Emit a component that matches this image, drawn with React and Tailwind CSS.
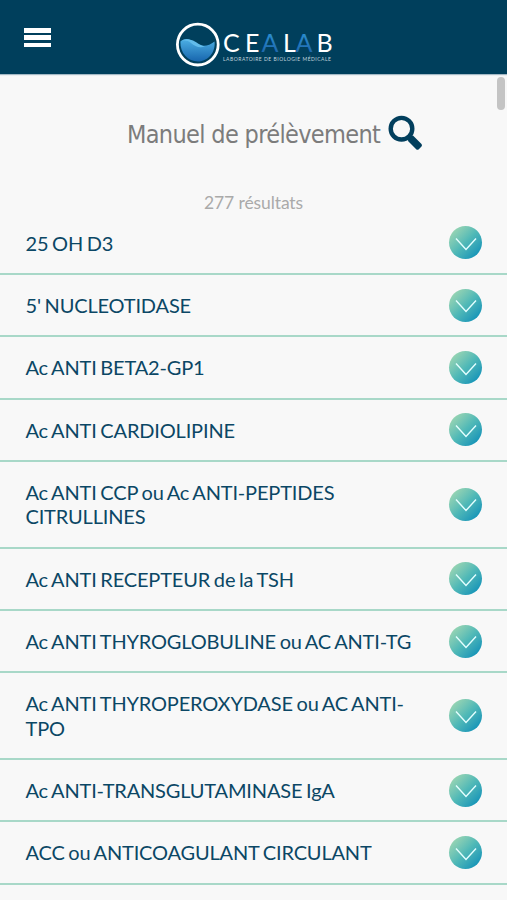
import React, { useState } from "react";

const analyses = [
    "25 OH D3",
    "5' NUCLEOTIDASE",
    "Ac ANTI BETA2-GP1",
    "Ac ANTI CARDIOLIPINE",
    "Ac ANTI CCP ou Ac ANTI-PEPTIDES CITRULLINES",
    "Ac ANTI RECEPTEUR de la TSH",
    "Ac ANTI THYROGLOBULINE ou AC ANTI-TG",
    "Ac ANTI THYROPEROXYDASE ou AC ANTI-TPO",
    "Ac ANTI-TRANSGLUTAMINASE IgA",
    "ACC ou ANTICOAGULANT CIRCULANT",
];

function Logo() {
    return (
        <svg width="160" height="48" viewBox="0 0 160 48" className="block">
            <defs>
                <linearGradient id="water" x1="0" y1="0" x2="0" y2="1">
                    <stop offset="0" stopColor="#4db0e4" />
                    <stop offset="1" stopColor="#1765ad" />
                </linearGradient>
                <linearGradient id="letter" x1="0" y1="0" x2="0" y2="1">
                    <stop offset="0" stopColor="#2f9bdb" />
                    <stop offset="1" stopColor="#1c5fa5" />
                </linearGradient>
            </defs>
            {/* drop of water in the ring */}
            <path d="M5.4 21.5C9 18 14 18 19 22C25 27 33 27 39.5 21.5C41 32 33 41.5 23 41.5C13 41.5 5 33 5.4 21.5Z" fill="url(#water)" />
            <path d="M14 19.5C20 20 23 25 30 26.3C25 28.5 20 26.5 16 23C12 20 8 20 5.5 22C8 19.5 11 19 14 19.5Z" fill="#62bceb" />
            <circle cx="22.8" cy="24.6" r="20.4" fill="none" stroke="#fff" strokeWidth="2.8" />
            <g fontFamily="Lato, sans-serif" fontSize="25" fill="#fff">
                <text x="48" y="31.7">C</text>
                <text x="70" y="31.7">E</text>
                <text x="86.5" y="31.7" fill="url(#letter)">A</text>
                <text x="108" y="31.7">L</text>
                <text x="120.5" y="31.7" fill="url(#letter)">A</text>
                <text x="141.5" y="31.7">B</text>
            </g>
            <text x="48" y="40.7" fontFamily="Lato, sans-serif" fontSize="5" fill="#c3d4df" textLength="108">
                LABORATOIRE DE BIOLOGIE MÉDICALE
            </text>
        </svg>
    );
}

function SearchIcon() {
    return (
        <svg width="38" height="38" viewBox="0 0 38 38" className="block shrink-0">
            <path d="M19 22.5L22.5 19L24.5 21L26 20.6L34.5 29Q35.5 30.2 34.5 31.4L31.8 34.2Q30.4 35.3 29.2 34.2L21 26L21.2 24.6Z" fill="#023f5d" />
            <circle cx="14.5" cy="13.7" r="10.8" fill="none" stroke="#023f5d" strokeWidth="4.4" />
        </svg>
    );
}

function Chevron() {
    return (
        <span className="flex h-[33px] w-[33px] shrink-0 items-center justify-center rounded-full bg-linear-to-br from-[#9bd6b2] from-10% via-[#50b9b7] via-50% to-[#0792b8] to-90%">
            <svg width="22" height="14" viewBox="0 0 22 14" fill="none" stroke="#e4ffff" strokeWidth="1.4" className="mt-[2px]">
                <path d="M1 1.5L11 12.5L21 1.5" />
            </svg>
        </span>
    );
}

export default function App() {
    const [opened, setOpened] = useState(null);

    return (
        <div className="flex h-[900px] w-full flex-col overflow-hidden bg-[#f8f8f8] font-[Lato,sans-serif]">
            {/* Header */}
            <header className="flex h-[74px] shrink-0 bg-[#003f5c] pl-6 shadow-[0_1px_1px_#a4b9c5]">
                <button type="button" aria-label="Menu" className="mt-[28px] flex h-[19px] w-[27px] flex-col justify-between">
                    <span className="h-[4.5px] w-full bg-white"></span>
                    <span className="h-[4.5px] w-full bg-white"></span>
                    <span className="h-[4.5px] w-full bg-white"></span>
                </button>
                <div className="ml-[124px] mt-5">
                    <Logo />
                </div>
            </header>

            <main className="relative flex-1">
                {/* Scrollbar */}
                <div className="absolute right-[2px] top-[3px] h-[33px] w-[8px] rounded-full bg-[#c4c4c4]"></div>

                <div className="flex h-[117px] pl-[127px] pt-[41px]">
                    <h1 className="mt-[2px] w-[260px] whitespace-nowrap font-['DejaVu_Sans_Condensed','DejaVu_Sans',sans-serif] text-[25px] font-normal leading-[36px] tracking-[-0.66px] text-[#7c7c7c] [font-stretch:condensed]">
                        Manuel de prélèvement
                    </h1>
                    <SearchIcon />
                </div>
                <p className="h-[21.7px] text-center text-[17.5px] leading-[23px] tracking-[-0.1px] text-[#aaa]">277 résultats</p>

                <ul>
                    {analyses.map((name, i) => (
                        <li key={name} className="border-b-2 border-[#a8d8c8]">
                            <button
                                type="button"
                                onClick={() => setOpened(opened === i ? null : i)}
                                className="flex w-full items-center justify-between pb-[18px] pl-[25.5px] pr-[25px] pt-[18px] text-left text-[20px] leading-[24.35px] tracking-[-0.17px] [word-spacing:-1.2px] text-[#0b4765]"
                            >
                                <span className="w-[395px]">{name}</span>
                                <span className="-my-2 flex">
                                    <Chevron />
                                </span>
                            </button>
                        </li>
                    ))}
                </ul>
            </main>
        </div>
    );
}
